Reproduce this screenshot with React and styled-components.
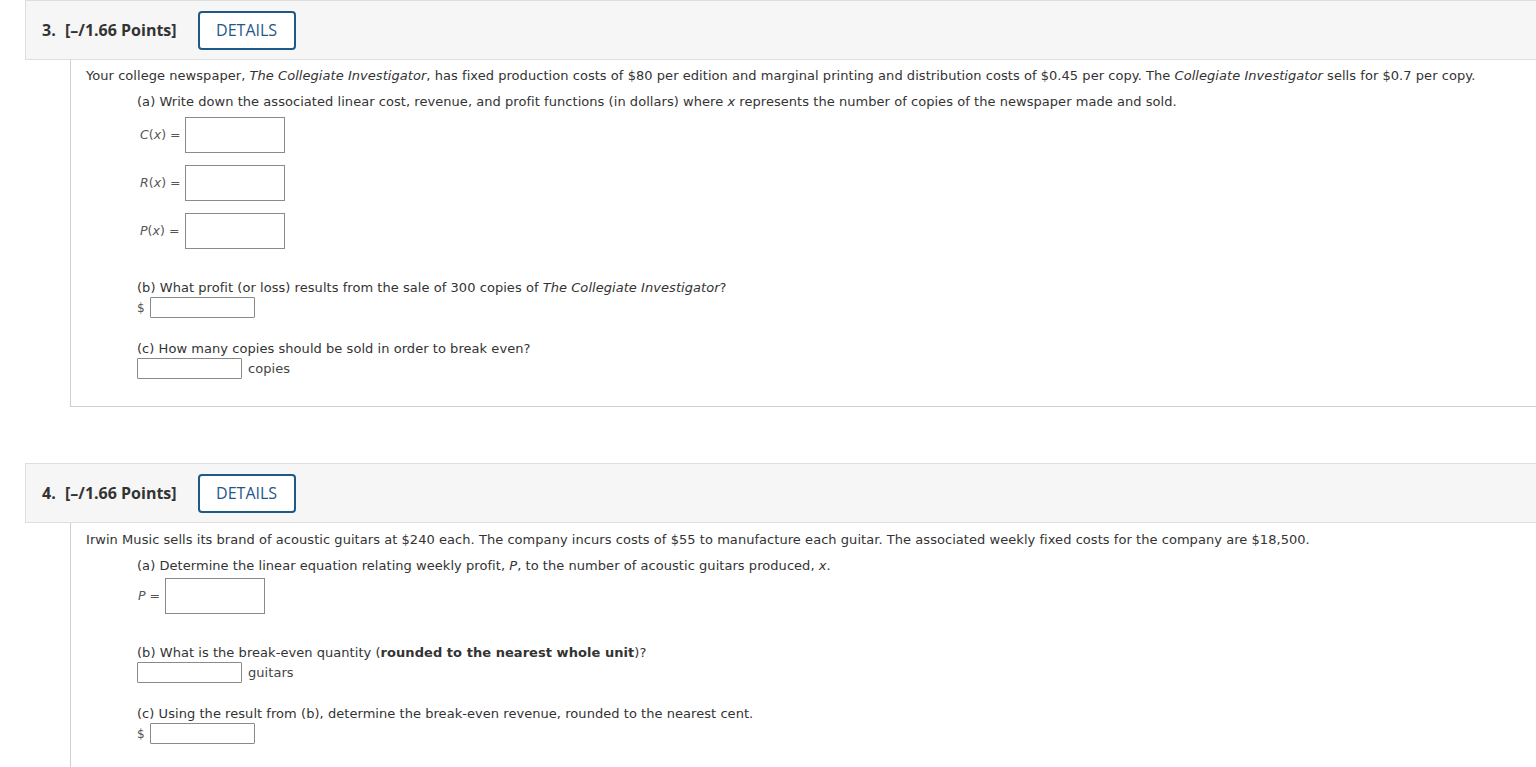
import React from "react";
import styled, { createGlobalStyle } from "styled-components";

const Global = createGlobalStyle`
  html, body { margin: 0; padding: 0; background: #fff; }
  body { font-family: Verdana, "DejaVu Sans", sans-serif; color: #333; }
`;

const Page = styled.div`
  padding-left: 25px;
  padding-top: 0;
  display: flex;
  flex-direction: column;
  gap: 56px;
`;

const Question = styled.section`
  display: flex;
  flex-direction: column;
`;

const Header = styled.div`
  height: 58px;
  display: flex;
  align-items: center;
  padding-left: 16px;
  background: #f6f6f6;
  border: 1px solid #dedede;
  border-right: none;
  font-family: "Open Sans", "Liberation Sans", sans-serif;
`;

const Num = styled.span`
  font-weight: 700;
  font-size: 16px;
  color: #333;
  width: 23px;
`;

const Points = styled.span`
  font-weight: 700;
  font-size: 16px;
  color: #333;
  margin-right: 21px;
`;

const DetailsButton = styled.button`
  height: 39px;
  width: 98px;
  border: 2px solid #1d5b86;
  border-radius: 4px;
  background: #fff;
  color: #22578a;
  font-family: "Open Sans", "Liberation Sans", sans-serif;
  font-size: 16px;
  font-weight: 500;
  padding: 0;
  cursor: pointer;
`;

const Body = styled.div`
  margin-left: 45px;
  border-left: 1px solid #cfcfcf;
  border-bottom: 1px solid #cfcfcf;
  padding: ${(p) => p.$pt || 8}px 0 ${(p) => p.$pb || 27}px 15px;
  font-size: 13px;
  line-height: 16px;
  letter-spacing: 0.05px;
  color: #333;
`;

const Line = styled.div`
  margin-top: ${(p) => p.$mt || 0}px;
  margin-left: ${(p) => p.$indent || 0}px;
  white-space: nowrap;
`;

const FuncRow = styled.div`
  display: flex;
  align-items: center;
  margin-left: 51px;
  margin-top: ${(p) => p.$mt || 0}px;
`;

const MathLabel = styled.span`
  font-family: "DejaVu Sans", Verdana, sans-serif;
  font-size: 12.5px;
  color: #555;
  width: ${(p) => p.$w}px;
  padding-left: ${(p) => p.$pl || 0}px;
  box-sizing: border-box;
  i { font-style: italic; }
`;

const BigInput = styled.div`
  width: 98px;
  height: 34px;
  border: 1px solid #8a8a8a;
  background: #fff;
`;

const SmallRow = styled.div`
  display: flex;
  align-items: center;
  margin-left: 51px;
  margin-top: 1px;
`;

const Dollar = styled.span`
  font-size: 12px;
  color: #555;
  width: 13px;
`;

const SmallInput = styled.div`
  width: ${(p) => p.$w || 103}px;
  height: 19px;
  border: 1px solid #8a8a8a;
  border-radius: 1px;
  background: #fff;
`;

const Unit = styled.span`
  margin-left: 6px;
  font-size: 13px;
  color: #444;
`;

export default function App() {
  return (
    <>
      <Global />
      <Page>
        <Question>
          <Header>
            <Num>3.</Num>
            <Points>[–/1.66 Points]</Points>
            <DetailsButton>DETAILS</DetailsButton>
          </Header>
          <Body>
            <Line>
              Your college newspaper, <i>The Collegiate Investigator</i>, has fixed production costs of $80 per edition and marginal printing and distribution costs of $0.45 per copy. The <i>Collegiate Investigator</i> sells for $0.7 per copy.
            </Line>
            <Line $mt={10} $indent={51}>
              (a) Write down the associated linear cost, revenue, and profit functions (in dollars) where <i>x</i> represents the number of copies of the newspaper made and sold.
            </Line>
            <FuncRow $mt={7}>
              <MathLabel $w={48} $pl={3}><i>C</i>(<i>x</i>) =</MathLabel>
              <BigInput />
            </FuncRow>
            <FuncRow $mt={12}>
              <MathLabel $w={48} $pl={3}><i>R</i>(<i>x</i>) =</MathLabel>
              <BigInput />
            </FuncRow>
            <FuncRow $mt={12}>
              <MathLabel $w={48} $pl={3}><i>P</i>(<i>x</i>) =</MathLabel>
              <BigInput />
            </FuncRow>
            <Line $mt={31} $indent={51}>
              (b) What profit (or loss) results from the sale of 300 copies of <i>The Collegiate Investigator</i>?
            </Line>
            <SmallRow>
              <Dollar>$</Dollar>
              <SmallInput $w={103} />
            </SmallRow>
            <Line $mt={23} $indent={51}>
              (c) How many copies should be sold in order to break even?
            </Line>
            <SmallRow>
              <SmallInput $w={103} />
              <Unit>copies</Unit>
            </SmallRow>
          </Body>
        </Question>

        <Question>
          <Header>
            <Num>4.</Num>
            <Points>[–/1.66 Points]</Points>
            <DetailsButton>DETAILS</DetailsButton>
          </Header>
          <Body $pt={9} $pb={40}>
            <Line>
              Irwin Music sells its brand of acoustic guitars at $240 each. The company incurs costs of $55 to manufacture each guitar. The associated weekly fixed costs for the company are $18,500.
            </Line>
            <Line $mt={10} $indent={51}>
              (a) Determine the linear equation relating weekly profit, <i>P</i>, to the number of acoustic guitars produced, <i>x</i>.
            </Line>
            <FuncRow $mt={4}>
              <MathLabel $w={28} $pl={1}><i>P</i> =</MathLabel>
              <BigInput />
            </FuncRow>
            <Line $mt={31} $indent={51}>
              (b) What is the break-even quantity (<b>rounded to the nearest whole unit</b>)?
            </Line>
            <SmallRow>
              <SmallInput $w={103} />
              <Unit>guitars</Unit>
            </SmallRow>
            <Line $mt={23} $indent={51}>
              (c) Using the result from (b), determine the break-even revenue, rounded to the nearest cent.
            </Line>
            <SmallRow>
              <Dollar>$</Dollar>
              <SmallInput $w={103} />
            </SmallRow>
          </Body>
        </Question>
      </Page>
    </>
  );
}
